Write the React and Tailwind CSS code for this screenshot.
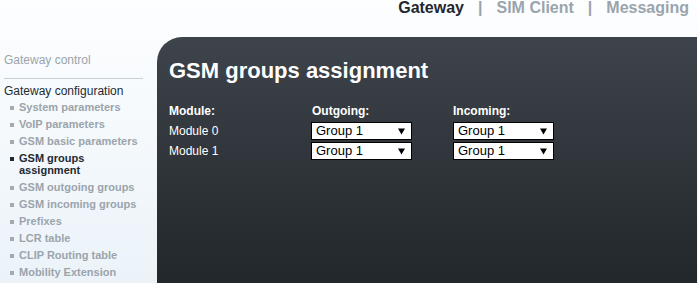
import React from "react";

const items = [
  { label: "System parameters" },
  { label: "VoIP parameters" },
  { label: "GSM basic parameters" },
  { label: "GSM groups assignment", active: true },
  { label: "GSM outgoing groups" },
  { label: "GSM incoming groups" },
  { label: "Prefixes" },
  { label: "LCR table" },
  { label: "CLIP Routing table" },
  { label: "Mobility Extension" },
];

function Select() {
  return (
    <div className="flex h-[18px] w-[101px] items-center justify-between border border-black bg-white pl-[4px] pr-[6px] text-[13px] leading-[16px] text-black">
      <span>Group 1</span>
      <svg width="7" height="7" viewBox="0 0 7 7" className="mt-[1px]">
        <polygon points="0,0.5 7,0.5 3.5,6.5" fill="#000" />
      </svg>
    </div>
  );
}

export default function App() {
  return (
    <div
      className="flex h-[283px] w-[698px] flex-col overflow-hidden bg-linear-to-b from-[#fdfeff] to-[#ebf3f9]"
      style={{ fontFamily: '"Liberation Sans", Arial, sans-serif' }}
    >
      {/* Top nav */}
      <div className="flex h-[37px] shrink-0 items-start justify-end gap-[14px] pr-[9px] text-[16px] font-bold leading-[16px]">
        <span className="text-[#1f2830]">Gateway</span>
        <span className="text-[#9aa4ac]">|</span>
        <span className="text-[#9aa4ac]">SIM Client</span>
        <span className="text-[#9aa4ac]">|</span>
        <span className="text-[#9aa4ac]">Messaging</span>
      </div>

      <div className="flex min-h-0 flex-1">
        {/* Sidebar */}
        <div className="-mt-[37px] w-[157px] shrink-0 pl-[4px] pt-[53px]">
          <p className="text-[12px] leading-[14px] text-[#9ca4aa]">Gateway control</p>
          <div className="mt-[11px] h-px w-[139px] bg-[#c8d0d5]" />
          <p className="mt-[5px] text-[12px] leading-[14px] text-[#1e2a31]">Gateway configuration</p>
          <ul className="mt-[3px] flex flex-col gap-[5px]">
            {items.map((it) => (
              <li key={it.label} className="flex items-start pl-[6px]">
                <span
                  className={`mt-[5px] h-[4px] w-[4px] shrink-0 ${it.active ? "bg-[#1f2a31]" : "bg-[#a3abb1]"}`}
                />
                <span
                  className={`ml-[5px] w-[122px] text-[11px] font-bold leading-[12px] ${
                    it.active ? "text-[#1f2a31]" : "text-[#9ba4ab]"
                  }`}
                >
                  {it.label}
                </span>
              </li>
            ))}
          </ul>
        </div>

        {/* Main panel */}
        <div className="mr-[1px] flex-1 rounded-tl-[25px] bg-linear-to-b from-[#3e444b] to-[#22272b] pl-[12px] pt-[21px] text-white">
          <h1 className="text-[22px] font-bold leading-[26px]">GSM groups assignment</h1>
          <div className="mt-[20px] grid grid-cols-[142px_142px_auto] text-[12px] leading-[14px]">
            <div className="font-bold">Module:</div>
            <div className="pl-[1px] font-bold">Outgoing:</div>
            <div className="font-bold">Incoming:</div>
          </div>
          <div className="mt-[4px] flex flex-col gap-[2px]">
            {["Module 0", "Module 1"].map((m) => (
              <div key={m} className="grid grid-cols-[142px_142px_auto] items-center text-[12px] leading-[14px]">
                <div>{m}</div>
                <Select />
                <Select />
              </div>
            ))}
          </div>
        </div>
      </div>
    </div>
  );
}
